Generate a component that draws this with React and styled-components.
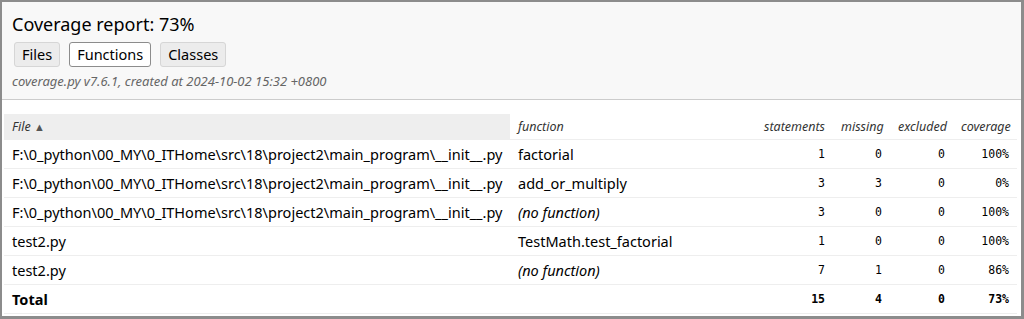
import React from "react";
import styled, { createGlobalStyle } from "styled-components";

const rows = [
  { file: "F:\\0_python\\00_MY\\0_ITHome\\src\\18\\project2\\main_program\\__init__.py", fn: "factorial", st: 1, mi: 0, ex: 0, cov: "100%" },
  { file: "F:\\0_python\\00_MY\\0_ITHome\\src\\18\\project2\\main_program\\__init__.py", fn: "add_or_multiply", st: 3, mi: 3, ex: 0, cov: "0%" },
  { file: "F:\\0_python\\00_MY\\0_ITHome\\src\\18\\project2\\main_program\\__init__.py", fn: "(no function)", none: true, st: 3, mi: 0, ex: 0, cov: "100%" },
  { file: "test2.py", fn: "TestMath.test_factorial", st: 1, mi: 0, ex: 0, cov: "100%" },
  { file: "test2.py", fn: "(no function)", none: true, st: 7, mi: 1, ex: 0, cov: "86%" },
];

const GlobalStyle = createGlobalStyle`
  html, body {
    margin: 0;
    padding: 0;
    background: #fff;
  }
  body {
    font-family: "Noto Sans", "Open Sans", sans-serif;
    color: #000;
  }
`;

const Frame = styled.div`
  box-sizing: border-box;
  width: 1024px;
  height: 319px;
  border: 2px solid #8c8c8c;
  border-right-width: 3px;
  border-bottom-width: 3px;
  overflow: hidden;
`;

const Header = styled.header`
  background: #f8f8f8;
  border-bottom: 1px solid #ccc;
  padding: 10px 10px 9px;
`;

const Title = styled.h1`
  margin: 0;
  font-size: 18px;
  line-height: 25px;
  font-weight: normal;
`;

const Tabs = styled.nav`
  display: flex;
  gap: 9px;
  margin-top: 5px;
  padding-left: 2px;
`;

const Tab = styled.a`
  box-sizing: border-box;
  height: 25px;
  padding: 0 7px;
  font-size: 14.5px;
  line-height: 23px;
  color: #000;
  border: 1px solid ${(p) => (p.$current ? "#8c8c8c" : "#d6d6d6")};
  border-radius: 3px;
  background: ${(p) => (p.$current ? "#fff" : "#ececec")};
  text-decoration: none;
`;

const Created = styled.p`
  margin: 6px 0 0;
  font-size: 13px;
  line-height: 17px;
  font-style: italic;
  color: #666;
`;

const Table = styled.table`
  table-layout: fixed;
  width: 1013px;
  margin: 14px 0 0 2px;
  border-collapse: collapse;
`;

const Th = styled.th`
  padding: 4px 8px;
  font-size: 12.5px;
  line-height: 17px;
  font-weight: normal;
  font-style: italic;
  color: #333;
  text-align: ${(p) => (p.$left ? "left" : "right")};
  border-bottom: 1px solid #eee;
  background: ${(p) => (p.$sorted ? "#eee" : "transparent")};
  white-space: nowrap;
`;

const Arrow = styled.span`
  font-size: 11px;
  color: #555;
  font-style: normal;
`;

const Row = styled.tr`
  font-weight: ${(p) => (p.$total ? "bold" : "normal")};
`;

const Name = styled.td`
  padding: 4px 8px;
  font-size: 14.5px;
  line-height: 20px;
  text-align: left;
  white-space: nowrap;
  font-style: ${(p) => (p.$none ? "italic" : "normal")};
  border-bottom: 1px solid #eee;
  border-top: ${(p) => (p.$total ? "1px solid #ddd" : "none")};
`;

const Num = styled.td`
  padding: 4px 8px;
  font-family: "DejaVu Sans Mono", "Liberation Mono", monospace;
  font-size: 11.5px;
  line-height: 20px;
  text-align: right;
  border-bottom: 1px solid #eee;
  border-top: ${(p) => (p.$total ? "1px solid #ddd" : "none")};
`;

export default function App() {
  return (
    <>
      <GlobalStyle />
      <Frame>
        <Header>
          <Title>Coverage report: 73%</Title>
          <Tabs>
            <Tab>Files</Tab>
            <Tab $current>Functions</Tab>
            <Tab>Classes</Tab>
          </Tabs>
          <Created>coverage.py v7.6.1, created at 2024-10-02 15:32 +0800</Created>
        </Header>
        <Table>
          <colgroup>
            <col style={{ width: 506 }} />
            <col style={{ width: 244 }} />
            <col style={{ width: 79 }} />
            <col style={{ width: 57 }} />
            <col style={{ width: 63 }} />
            <col style={{ width: 64 }} />
          </colgroup>
          <thead>
            <tr>
              <Th $left $sorted>
                File <Arrow>▲</Arrow>
              </Th>
              <Th $left>function</Th>
              <Th>statements</Th>
              <Th>missing</Th>
              <Th>excluded</Th>
              <Th>coverage</Th>
            </tr>
          </thead>
          <tbody>
            {rows.map((r, i) => (
              <Row key={i}>
                <Name>{r.file}</Name>
                <Name $none={r.none}>{r.fn}</Name>
                <Num>{r.st}</Num>
                <Num>{r.mi}</Num>
                <Num>{r.ex}</Num>
                <Num>{r.cov}</Num>
              </Row>
            ))}
            <Row $total>
              <Name $total>Total</Name>
              <Name $total />
              <Num $total>15</Num>
              <Num $total>4</Num>
              <Num $total>0</Num>
              <Num $total>73%</Num>
            </Row>
          </tbody>
        </Table>
      </Frame>
    </>
  );
}
